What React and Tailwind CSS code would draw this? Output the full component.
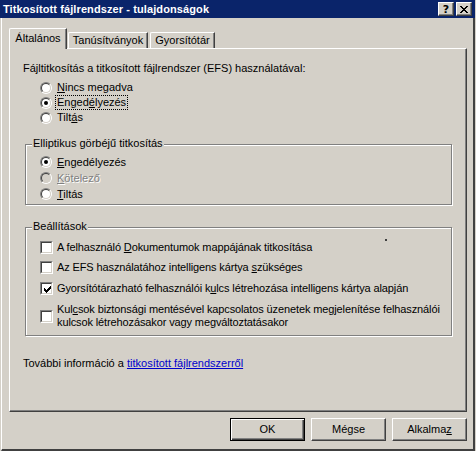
import React from "react";

function Radio({ checked, disabled }) {
  return (
    <span className="relative block w-[12px] h-[12px] shrink-0 rounded-full border border-t-[#808080] border-l-[#808080] border-r-white border-b-white">
      <span
        className={
          "absolute inset-0 flex items-center justify-center rounded-full border border-t-[#404040] border-l-[#404040] border-r-[#d4d0c8] border-b-[#d4d0c8] " +
          (disabled ? "bg-[#d4d0c8]" : "bg-white")
        }
      >
        {checked && <span className="block w-[4px] h-[4px] rounded-full bg-black" />}
      </span>
    </span>
  );
}

function Check({ checked }) {
  return (
    <span className="relative block w-[13px] h-[13px] shrink-0 border border-t-[#808080] border-l-[#808080] border-r-white border-b-white">
      <span className="absolute inset-0 bg-white border border-t-[#404040] border-l-[#404040] border-r-[#d4d0c8] border-b-[#d4d0c8]">
        {checked && (
          <svg width="11" height="11" viewBox="1 1 11 11" className="block">
            <path
              d="M3 5h1v3h-1z M4 6h1v3h-1z M5 7h1v3h-1z M6 6h1v3h-1z M7 5h1v3h-1z M8 4h1v3h-1z M9 3h1v3h-1z"
              fill="#000"
            />
          </svg>
        )}
      </span>
    </span>
  );
}

function GroupBox({ label, className, children }) {
  return (
    <div
      className={
        "relative ml-[2px] w-[427px] border border-[#808080] shadow-[1px_1px_0_#ffffff,inset_1px_1px_0_#ffffff] " +
        className
      }
    >
      <span className="absolute left-[6px] top-[-8px] bg-[#d4d0c8] px-[1px] leading-[13px] tracking-normal">{label}</span>
      {children}
    </div>
  );
}

function Btn({ children, def }) {
  return (
    <div
      className={
        "w-[75px] h-[23px] flex items-center justify-center bg-[#d4d0c8] " +
        (def
          ? "border border-black shadow-[inset_1px_1px_0_#ffffff,inset_-1px_-1px_0_#404040,inset_-2px_-2px_0_#808080]"
          : "border border-t-white border-l-white border-r-[#404040] border-b-[#404040] shadow-[inset_-1px_-1px_0_#808080]")
      }
    >
      {children}
    </div>
  );
}

export default function App() {
  return (
    <div className="w-[476px] h-[451px] bg-[#d4d0c8] flex flex-col font-['Liberation_Sans',Arial,sans-serif] text-[11px] leading-[13px] text-black overflow-hidden">
      {/* Title bar */}
      <div className="h-[18px] w-[475px] bg-[#0a246a] flex items-center justify-between pl-[3px] pr-[3px] shrink-0">
        <span className="text-white font-bold text-[11px] leading-[13px] tracking-[0.1px]">Titkosított fájlrendszer - tulajdonságok</span>
        <div className="flex items-center gap-[2px]">
          <div className="w-[16px] h-[14px] bg-[#d4d0c8] flex items-center justify-center border border-t-white border-l-white border-r-[#404040] border-b-[#404040] shadow-[inset_-1px_-1px_0_#808080]">
            <span className="font-bold text-[11px] leading-[11px] font-['DejaVu_Sans',sans-serif]">?</span>
          </div>
          <div className="w-[16px] h-[14px] bg-[#d4d0c8] flex items-center justify-center border border-t-white border-l-white border-r-[#404040] border-b-[#404040] shadow-[inset_-1px_-1px_0_#808080]">
            <svg width="8" height="7" viewBox="0 0 8 7" className="block">
              <path
                d="M0 0h2v1H0z M6 0h2v1H6z M1 1h2v1H1z M5 1h2v1H5z M2 2h4v1H2z M3 3h2v1H3z M2 4h4v1H2z M1 5h2v1H1z M5 5h2v1H5z M0 6h2v1H0z M6 6h2v1H6z"
                fill="#000"
              />
            </svg>
          </div>
        </div>
      </div>

      {/* Body */}
      <div className="flex-1 ml-[1px] w-[474px] border-l border-white border-r-2 border-r-[#404040] border-b-2 border-b-[#404040] pl-[7px] pt-[10px]">
        <div className="w-[458px] flex flex-col">
          {/* Tabs */}
          <div className="h-[20px] flex items-start">
            <div className="relative z-10 w-[58px] h-[21px] bg-[#d4d0c8] border-t border-l border-white border-r border-r-[#404040] shadow-[inset_-1px_0_0_#808080] rounded-tl-[2px] flex items-center justify-center pb-[1px]">
              Általános
            </div>
            <div className="mt-[4px] ml-[1px] w-[80px] h-[16px] border-t border-l border-white border-r border-r-[#404040] shadow-[inset_-1px_0_0_#808080] rounded-tl-[2px] flex items-center justify-center">
              Tanúsítványok
            </div>
            <div className="mt-[4px] ml-[2px] w-[65px] h-[16px] border-t border-l border-white border-r border-r-[#404040] shadow-[inset_-1px_0_0_#808080] rounded-tl-[2px] flex items-center justify-center">
              Gyorsítótár
            </div>
          </div>

          {/* Panel */}
          <div className="h-[364px] border-t border-l border-white border-r border-b border-r-[#404040] border-b-[#404040] shadow-[inset_-1px_-1px_0_#808080] pl-[13px] pt-[13px] flex flex-col">
            <div className="h-[13px]">Fájltitkosítás a titkosított fájlrendszer (EFS) használatával:</div>
            <div className="mt-[5px] pl-[17px] flex flex-col">
              <div className="h-[15px] flex items-center gap-[5px]">
                <Radio />
                <span>
                  <u>N</u>incs megadva
                </span>
              </div>
              <div className="h-[15px] flex items-center gap-[4px]">
                <Radio checked />
                <span className="outline outline-1 outline-dotted outline-black px-[1px]">
                  Enged<u>é</u>lyezés
                </span>
              </div>
              <div className="h-[15px] flex items-center gap-[5px]">
                <Radio />
                <span>
                  Tilt<u>á</u>s
                </span>
              </div>
            </div>

            <GroupBox label="Elliptikus görbéjű titkosítás" className="mt-[19px] h-[61px] pt-[9px] pl-[14px]">
              <div className="h-[16px] flex items-center gap-[5px]">
                <Radio checked />
                <span>
                  <u>E</u>ngedélyezés
                </span>
              </div>
              <div className="h-[16px] flex items-center gap-[5px]">
                <Radio disabled />
                <span className="text-[#808080] [text-shadow:1px_1px_0_#ffffff]">
                  <u>K</u>ötelező
                </span>
              </div>
              <div className="h-[16px] flex items-center gap-[5px]">
                <Radio />
                <span>
                  <u>T</u>iltás
                </span>
              </div>
            </GroupBox>

            <GroupBox label="Beállítások" className="mt-[22px] h-[109px] pt-[13px] pl-[14px] tracking-[-0.12px]">
              <span className="absolute left-[359px] top-[11px] w-[2px] h-[2px] bg-[#404040]" />
              <div className="h-[13px] flex items-center gap-[4px]">
                <Check />
                <span>
                  A felhasználó <u>D</u>okumentumok mappájának titkosítása
                </span>
              </div>
              <div className="mt-[7px] h-[13px] flex items-center gap-[4px]">
                <Check />
                <span>
                  Az EFS használatához intelligens kártya <u>s</u>zükséges
                </span>
              </div>
              <div className="mt-[8px] h-[13px] flex items-center gap-[4px]">
                <Check checked />
                <span>
                  Gyorsítótárazható felhasználói k<u>u</u>lcs létrehozása intelligens kártya alapján
                </span>
              </div>
              <div className="mt-[8px] flex items-center gap-[4px]">
                <Check />
                <span>
                  Kul<u>c</u>sok biztonsági mentésével kapcsolatos üzenetek megjelenítése felhasználói
                  <br />
                  kulcsok létrehozásakor vagy megváltoztatásakor
                </span>
              </div>
            </GroupBox>

            <div className="mt-[21px] h-[13px]">
              További információ a <span className="text-[#0000cc] underline">titkosított fájlrendszerről</span>
            </div>
          </div>

          {/* Buttons */}
          <div className="mt-[6px] flex justify-end gap-[6px]">
            <Btn def>OK</Btn>
            <Btn>Mégse</Btn>
            <Btn>
              <span>
                Alkalma<u>z</u>
              </span>
            </Btn>
          </div>
        </div>
      </div>
    </div>
  );
}
